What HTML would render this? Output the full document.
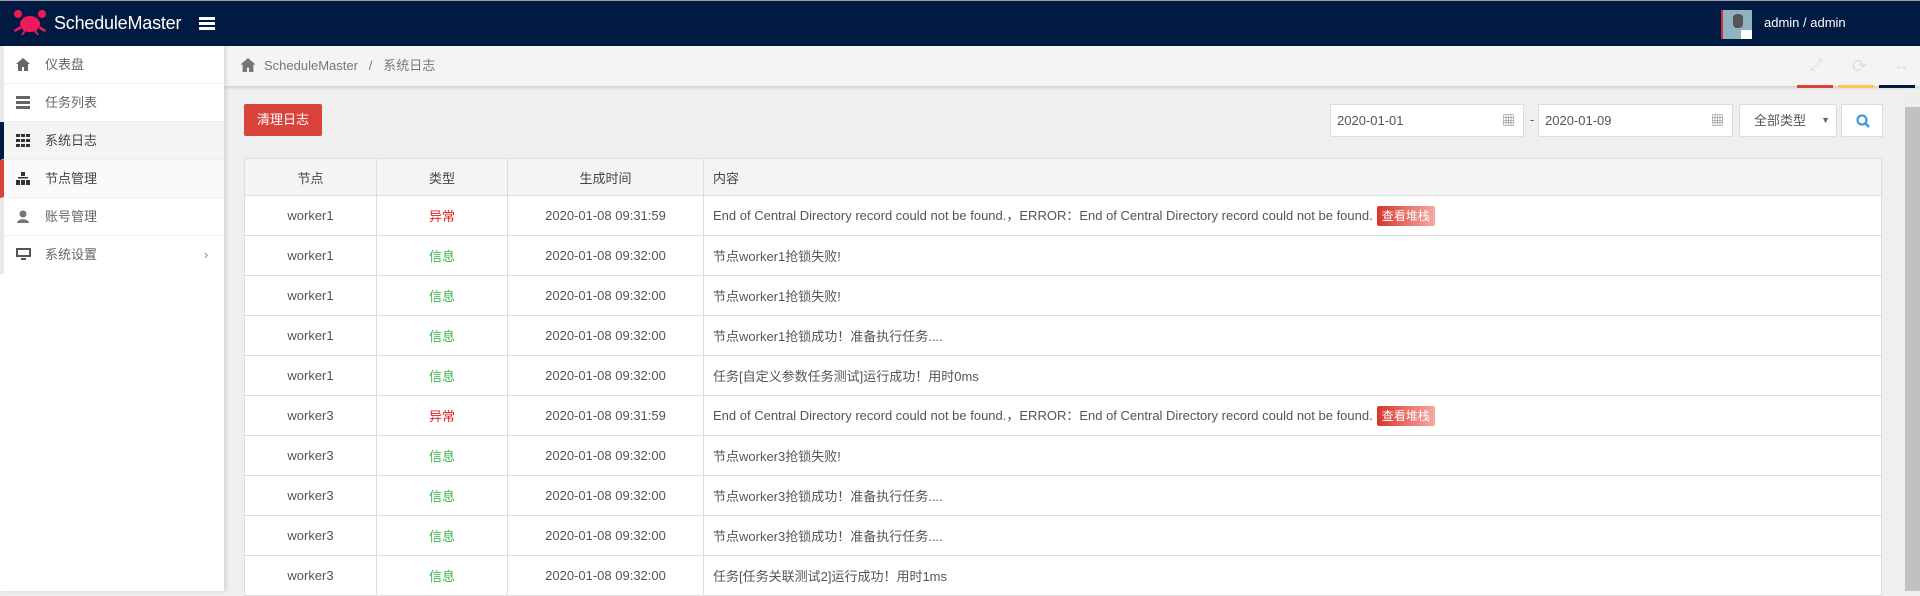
<!DOCTYPE html>
<html><head><meta charset="utf-8"><style>
*{box-sizing:border-box;margin:0;padding:0}
body{width:1920px;height:591px;overflow:hidden;background:#efefef;font-family:"Liberation Sans","Noto Sans CJK SC",sans-serif;font-size:13px;color:#555;position:relative}
.top{position:absolute;left:0;top:0;width:1920px;height:46px;background:#001a41;border-top:1px solid #999}
.logo{position:absolute;left:54px;top:12px;color:#fff;font-size:18px;font-family:"Liberation Sans",sans-serif;letter-spacing:-.2px}
.side{position:absolute;left:0;top:46px;width:224px;height:545px;background:#fff;box-shadow:2px 0 4px rgba(0,0,0,.12);z-index:2}
.si{height:38px;border-bottom:1px solid #eee;line-height:38px;padding-left:41px;position:relative;font-size:13px;color:#666;border-left:4px solid #e8e8e8}
.si svg{position:absolute;left:12px;top:12px}
.bc{position:absolute;left:224px;top:46px;width:1696px;height:40px;background:#f4f4f4;box-shadow:0 2px 3px rgba(0,0,0,.12);line-height:40px;padding-left:40px;font-size:13px;color:#777}
table{position:absolute;left:244px;top:158px;width:1638px;border-collapse:collapse;background:#fff}
td,th{border:1px solid #ddd;height:40px;font-weight:normal;color:#555;font-size:13px}
th{height:37px;background:#f4f4f4;color:#444}
td:nth-child(-n+3),th:nth-child(-n+3){text-align:center}
td:nth-child(4),th:nth-child(4){text-align:left;padding-left:9px}
.r{color:#e02020}.g{color:#3ab54a}
.bd{display:inline-block;background:linear-gradient(90deg,#d9362c,#f4aaa4);color:#fff;font-size:12px;padding:0 5px;line-height:20px;border-radius:2px;margin-left:4px}
.inp{position:absolute;top:104px;height:33px;background:#fff;border:1px solid #ddd;color:#555;line-height:31px;padding-left:6px;font-size:13px}
</style></head><body>
<div class="top">
<svg style="position:absolute;left:12px;top:9px" width="36" height="26" viewBox="0 0 36 26"><g fill="#f0195a"><ellipse cx="18" cy="14" rx="10" ry="8"/><circle cx="6" cy="4" r="4"/><circle cx="30" cy="4" r="4"/><path d="M8 16l-6 4 1 2 6-3zM28 16l6 4-1 2-6-3zM12 20l-3 5h2l3-4zM24 20l3 5h-2l-3-4z"/></g></svg>
<div class="logo">ScheduleMaster</div>
<div style="position:absolute;left:199px;top:16px;width:16px;height:13px;border-top:3px solid #fff;border-bottom:3px solid #fff"><div style="margin-top:2px;height:3px;background:#fff"></div></div>
<div style="position:absolute;left:1721px;top:9px;width:31px;height:29px;background:#8fb3c2;border-left:2px solid #c33"><div style="position:absolute;right:0;bottom:0;width:11px;height:9px;background:#fff"></div><div style="position:absolute;left:10px;top:4px;width:10px;height:14px;background:#555;border-radius:4px"></div></div>
<div style="position:absolute;left:1764px;top:14px;color:#fff;font-size:13px">admin / admin</div>
</div>
<div class="side">
<div class="si"><svg width="14" height="13" viewBox="0 0 14 13"><path d="M7 0L0 6h2v7h4V9h2v4h4V6h2z" fill="#666"/></svg>仪表盘</div>
<div class="si"><svg width="14" height="13"><rect y="0" width="14" height="3" fill="#666"/><rect y="5" width="14" height="3" fill="#666"/><rect y="10" width="14" height="3" fill="#666"/></svg>任务列表</div>
<div class="si" style="background:#f4f4f4;border-left-color:#001a41;color:#444"><svg width="14" height="13"><g fill="#333"><rect width="4" height="3"/><rect x="5" width="4" height="3"/><rect x="10" width="4" height="3"/><rect y="5" width="4" height="3"/><rect x="5" y="5" width="4" height="3"/><rect x="10" y="5" width="4" height="3"/><rect y="10" width="4" height="3"/><rect x="5" y="10" width="4" height="3"/><rect x="10" y="10" width="4" height="3"/></g></svg>系统日志</div>
<div class="si" style="background:#fafafa;border-left-color:#d9433a;color:#444"><svg width="14" height="13"><g fill="#333"><rect x="5" width="4" height="4"/><rect x="2" y="5" width="10" height="1.5"/><rect y="8" width="4" height="5"/><rect x="5" y="8" width="4" height="5"/><rect x="10" y="8" width="4" height="5"/></g></svg>节点管理</div>
<div class="si"><svg width="14" height="13"><circle cx="7" cy="4" r="3.5" fill="#777"/><path d="M1 13c0-5 12-5 12 0z" fill="#777"/></svg>账号管理</div>
<div class="si" style="border-bottom:none"><svg width="15" height="13"><rect x="0" y="0" width="15" height="9" fill="#555"/><rect x="2" y="2" width="11" height="5" fill="#fff"/><rect x="5" y="10" width="5" height="2" fill="#555"/></svg>系统设置<span style="position:absolute;left:200px;color:#888">›</span></div>
</div>
<div class="bc"><svg style="position:absolute;left:16px;top:12px" width="16" height="14" viewBox="0 0 14 13"><path d="M7 0L0 6h2v7h4V9h2v4h4V6h2z" fill="#777"/></svg>ScheduleMaster &nbsp;&nbsp;/&nbsp;&nbsp; 系统日志
<span style="position:absolute;left:1586px;top:0;color:#ddd;font-size:16px">⤢</span><span style="position:absolute;left:1628px;top:0;color:#ddd;font-size:18px">⟳</span><span style="position:absolute;left:1669px;top:0;color:#ddd;font-size:16px">↔</span></div>
<div style="position:absolute;left:1797px;top:85px;width:36px;height:3px;background:#d9433a"></div>
<div style="position:absolute;left:1838px;top:85px;width:36px;height:3px;background:#fdc94b"></div>
<div style="position:absolute;left:1879px;top:85px;width:36px;height:3px;background:#001a41"></div>
<div style="position:absolute;left:1905px;top:92px;width:15px;height:499px;background:#eee"><div style="margin-top:15px;height:484px;background:#c1c1c1"></div></div>
<div style="position:absolute;left:244px;top:104px;width:78px;height:32px;background:#d9433a;color:#fff;border-radius:2px;line-height:32px;text-align:center;font-size:13px">清理日志</div>
<div class="inp" style="left:1330px;width:194px">2020-01-01<span style="position:absolute;right:8px;color:#777">▦</span></div>
<div style="position:absolute;left:1530px;top:112px">-</div>
<div class="inp" style="left:1538px;width:195px">2020-01-09<span style="position:absolute;right:8px;color:#777">▦</span></div>
<div class="inp" style="left:1739px;width:98px;padding-left:14px;border-radius:3px">全部类型<span style="position:absolute;right:6px;font-size:9px;color:#666">▼</span></div>
<div class="inp" style="left:1841px;width:42px;padding:0"><svg style="position:absolute;left:14px;top:9px" width="14" height="14"><circle cx="6" cy="6" r="4.5" stroke="#3c9be6" stroke-width="2.2" fill="none"/><path d="M9 9l4 4" stroke="#3c9be6" stroke-width="2.5"/></svg></div>
<table>
<tr><th style="width:132px">节点</th><th style="width:131px">类型</th><th style="width:196px">生成时间</th><th>内容</th></tr>
<tr><td>worker1</td><td class="r">异常</td><td>2020-01-08 09:31:59</td><td>End of Central Directory record could not be found.，ERROR：End of Central Directory record could not be found.<span class="bd">查看堆栈</span></td></tr>
<tr><td>worker1</td><td class="g">信息</td><td>2020-01-08 09:32:00</td><td>节点worker1抢锁失败!</td></tr>
<tr><td>worker1</td><td class="g">信息</td><td>2020-01-08 09:32:00</td><td>节点worker1抢锁失败!</td></tr>
<tr><td>worker1</td><td class="g">信息</td><td>2020-01-08 09:32:00</td><td>节点worker1抢锁成功！准备执行任务....</td></tr>
<tr><td>worker1</td><td class="g">信息</td><td>2020-01-08 09:32:00</td><td>任务[自定义参数任务测试]运行成功！用时0ms</td></tr>
<tr><td>worker3</td><td class="r">异常</td><td>2020-01-08 09:31:59</td><td>End of Central Directory record could not be found.，ERROR：End of Central Directory record could not be found.<span class="bd">查看堆栈</span></td></tr>
<tr><td>worker3</td><td class="g">信息</td><td>2020-01-08 09:32:00</td><td>节点worker3抢锁失败!</td></tr>
<tr><td>worker3</td><td class="g">信息</td><td>2020-01-08 09:32:00</td><td>节点worker3抢锁成功！准备执行任务....</td></tr>
<tr><td>worker3</td><td class="g">信息</td><td>2020-01-08 09:32:00</td><td>节点worker3抢锁成功！准备执行任务....</td></tr>
<tr><td>worker3</td><td class="g">信息</td><td>2020-01-08 09:32:00</td><td>任务[任务关联测试2]运行成功！用时1ms</td></tr>
</table>
</body></html>
